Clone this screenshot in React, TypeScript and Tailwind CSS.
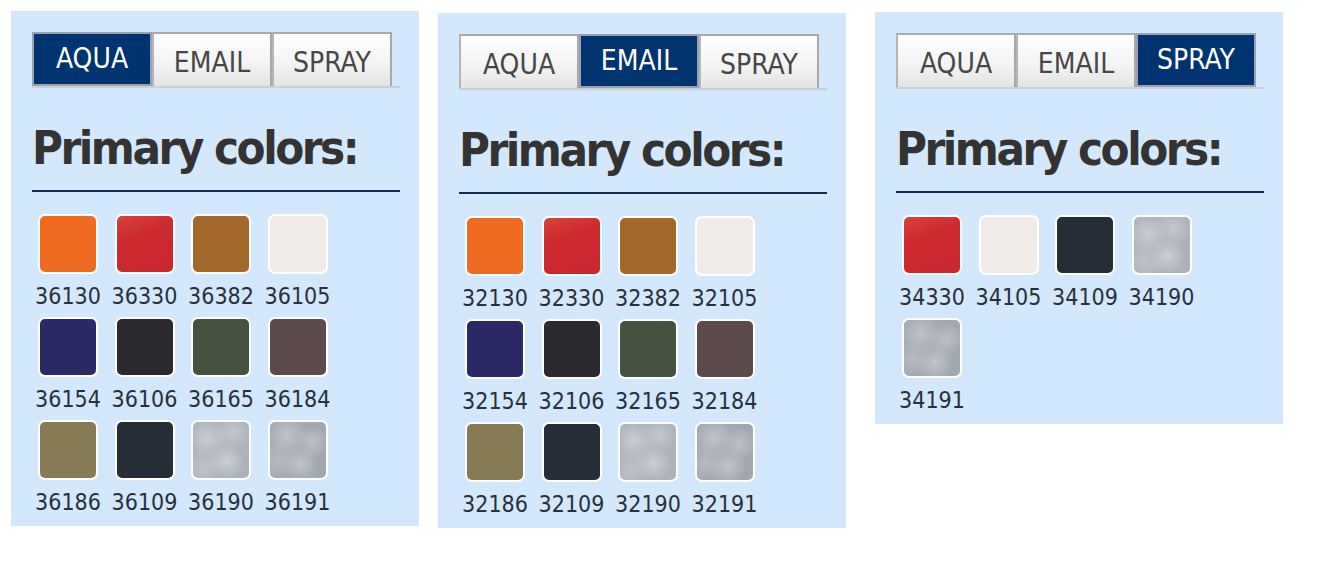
const TABS = ['AQUA', 'EMAIL', 'SPRAY'];

type Swatch = { code: string; bg: string };

const RED = 'bg-[linear-gradient(160deg,#d8443c_0%,#cc2a2e_35%,#c9272d_100%)]';
const SILVER =
  'bg-[#acb2ba] bg-[image:radial-gradient(circle_at_25%_30%,#c9ced4_0%,transparent_35%),radial-gradient(circle_at_70%_20%,#c3c8ce_0%,transparent_30%),radial-gradient(circle_at_60%_70%,#cbd0d6_0%,transparent_35%),radial-gradient(circle_at_20%_80%,#bfc4ca_0%,transparent_30%)]';
const GREY =
  'bg-[#a2a8b1] bg-[image:radial-gradient(circle_at_30%_25%,#bfc4cb_0%,transparent_35%),radial-gradient(circle_at_75%_35%,#bcc1c8_0%,transparent_30%),radial-gradient(circle_at_55%_75%,#c0c5cb_0%,transparent_35%),radial-gradient(circle_at_15%_70%,#b6bbc2_0%,transparent_30%)]';

const panels: { active: number; mt: string; swatches: Swatch[] }[] = [
  {
    active: 0,
    mt: 'mt-[11px]',
    swatches: [
      { code: '36130', bg: 'bg-[#f06b22]' },
      { code: '36330', bg: RED },
      { code: '36382', bg: 'bg-[#a4682a]' },
      { code: '36105', bg: 'bg-[#f1ebe8]' },
      { code: '36154', bg: 'bg-[#2b2a66]' },
      { code: '36106', bg: 'bg-[#2c2a2f]' },
      { code: '36165', bg: 'bg-[#44523f]' },
      { code: '36184', bg: 'bg-[#5d4a4a]' },
      { code: '36186', bg: 'bg-[#867b53]' },
      { code: '36109', bg: 'bg-[#252d37]' },
      { code: '36190', bg: SILVER },
      { code: '36191', bg: GREY },
    ],
  },
  {
    active: 1,
    mt: 'mt-[13px]',
    swatches: [
      { code: '32130', bg: 'bg-[#f06b22]' },
      { code: '32330', bg: RED },
      { code: '32382', bg: 'bg-[#a4682a]' },
      { code: '32105', bg: 'bg-[#f1ebe8]' },
      { code: '32154', bg: 'bg-[#2b2a66]' },
      { code: '32106', bg: 'bg-[#2c2a2f]' },
      { code: '32165', bg: 'bg-[#44523f]' },
      { code: '32184', bg: 'bg-[#5d4a4a]' },
      { code: '32186', bg: 'bg-[#867b53]' },
      { code: '32109', bg: 'bg-[#252d37]' },
      { code: '32190', bg: SILVER },
      { code: '32191', bg: GREY },
    ],
  },
  {
    active: 2,
    mt: 'mt-[12px]',
    swatches: [
      { code: '34330', bg: RED },
      { code: '34105', bg: 'bg-[#f1ebe8]' },
      { code: '34109', bg: 'bg-[#252d37]' },
      { code: '34190', bg: SILVER },
      { code: '34191', bg: GREY },
    ],
  },
];

function Tabs({ active }: { active: number }) {
  return (
    <div className="flex w-[368px] border-b-2 border-[#c9d0d8]">
      {TABS.map((t, i) =>
        i === active ? (
          <div
            key={t}
            className="w-[120px] h-[54px] flex items-center justify-center bg-[#003470] border-2 border-[#9aa3ad] text-white text-[28px] font-medium"
          >
            {t}
          </div>
        ) : (
          <div
            key={t}
            className="w-[120px] h-[54px] flex items-center justify-center pt-[5px] bg-[linear-gradient(180deg,#ffffff_0%,#f4f4f4_55%,#e4e4e4_100%)] border-2 border-b-0 border-[#a9a9a9] border-l-[#b5b5b5] text-[#474747] text-[28px]"
          >
            {t}
          </div>
        )
      )}
    </div>
  );
}

function Panel({ active, mt, swatches }: { active: number; mt: string; swatches: Swatch[] }) {
  return (
    <div className={`w-[408px] bg-[#d3e8fc] pl-[21px] pr-[19px] pt-[21px] pb-[11px] ${mt}`}>
      <Tabs active={active} />
      <h2 className="mt-[32px] text-[47px] leading-[56px] font-bold text-[#333333] tracking-[-2.5px]">Primary colors:</h2>
      <div className="mt-[14px] h-[2px] bg-[#0f2d57]" />
      <div className="mt-[22px] grid grid-cols-[repeat(4,72px)] gap-x-[4.5px] gap-y-[8px]">
        {swatches.map((s) => (
          <div key={s.code} className="flex flex-col items-center">
            <div className={`w-[60px] h-[60px] rounded-[7px] border-2 border-white ${s.bg}`} />
            <span className="mt-[9px] text-[23px] leading-[26px] text-[#27303c]">{s.code}</span>
          </div>
        ))}
      </div>
    </div>
  );
}

export default function App() {
  return (
    <div
      className="w-[1334px] h-[568px] bg-white flex items-start pl-[11px] font-stretch-condensed"
      style={{ fontFamily: '"DejaVu Sans Condensed", "DejaVu Sans", sans-serif' }}
    >
      <Panel {...panels[0]} />
      <div className="ml-[19px]">
        <Panel {...panels[1]} />
      </div>
      <div className="ml-[29px]">
        <Panel {...panels[2]} />
      </div>
    </div>
  );
}
